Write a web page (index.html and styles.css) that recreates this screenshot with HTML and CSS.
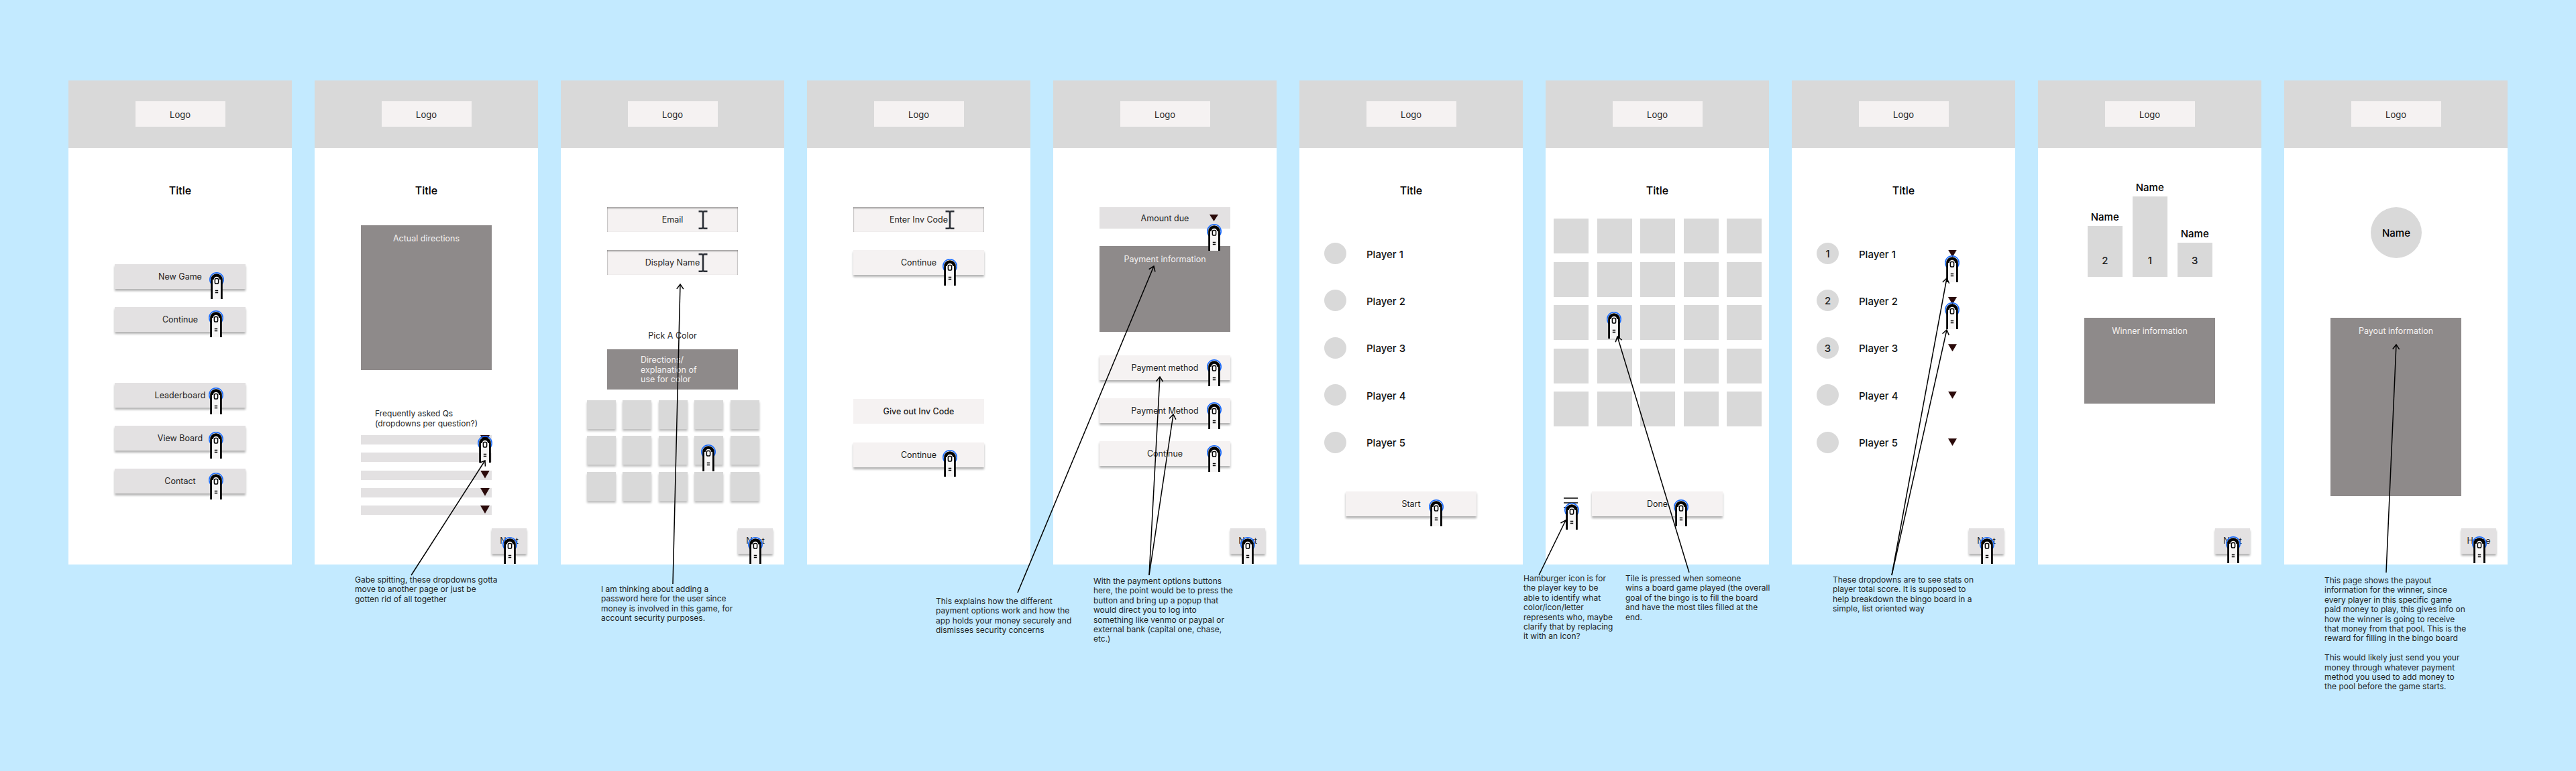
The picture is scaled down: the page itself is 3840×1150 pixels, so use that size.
FILE: index.html
```html
<!DOCTYPE html>
<html>
    <head>
        <title>Bingo wireframes</title>
        <link rel="stylesheet" href="styles.css">
    </head>
    <body>
        <div class="board">

            <!-- home -->
            <section class="screen">
                <header class="top"><div class="logo">Logo</div></header>
                <h2 class="title">Title</h2>
                <div class="stack menu-one">
                    <div class="btn grey">New Game</div>
                    <div class="btn grey">Continue</div>
                </div>
                <div class="stack menu-two">
                    <div class="btn grey">Leaderboard</div>
                    <div class="btn grey">View Board</div>
                    <div class="btn grey">Contact</div>
                </div>
            </section>

            <!-- directions -->
            <section class="screen">
                <header class="top"><div class="logo">Logo</div></header>
                <h2 class="title">Title</h2>
                <div class="dark directions">Actual directions</div>
                <p class="faq">Frequently asked Qs<br>(dropdowns per question?)</p>
                <div class="faq-rows">
                    <div class="faq-row"><span class="tri"></span></div>
                    <div class="faq-row"><span class="tri"></span></div>
                    <div class="faq-row"><span class="tri"></span></div>
                    <div class="faq-row"><span class="tri"></span></div>
                    <div class="faq-row"><span class="tri"></span></div>
                </div>
                <div class="next">Next</div>
            </section>

            <!-- sign up -->
            <section class="screen">
                <header class="top"><div class="logo">Logo</div></header>
                <div class="stack form-top">
                    <div class="btn input">Email</div>
                    <div class="btn input">Display Name</div>
                </div>
                <div class="pick">Pick A Color</div>
                <div class="dark color-help">Directions/<br>explanation of<br>use for color</div>
                <div class="swatches">
                    <div class="swatch"></div><div class="swatch"></div><div class="swatch"></div><div class="swatch"></div><div class="swatch"></div>
                    <div class="swatch"></div><div class="swatch"></div><div class="swatch"></div><div class="swatch"></div><div class="swatch"></div>
                    <div class="swatch"></div><div class="swatch"></div><div class="swatch"></div><div class="swatch"></div><div class="swatch"></div>
                </div>
                <div class="next">Next</div>
            </section>

            <!-- invite code -->
            <section class="screen">
                <header class="top"><div class="logo">Logo</div></header>
                <div class="stack form-top">
                    <div class="btn input">Enter Inv Code</div>
                    <div class="btn light">Continue</div>
                </div>
                <div class="stack invite">
                    <div class="btn flat">Give out Inv Code</div>
                    <div class="btn light">Continue</div>
                </div>
            </section>

            <!-- payment -->
            <section class="screen">
                <header class="top"><div class="logo">Logo</div></header>
                <div class="amount">Amount due<span class="tri"></span></div>
                <div class="dark pay-info">Payment information</div>
                <div class="stack pay-buttons">
                    <div class="btn light">Payment method</div>
                    <div class="btn light">Payment Method</div>
                    <div class="btn light">Continue</div>
                </div>
                <div class="next">Next</div>
            </section>

            <!-- player list -->
            <section class="screen">
                <header class="top"><div class="logo">Logo</div></header>
                <h2 class="title">Title</h2>
                <div class="players">
                    <div class="player"><span class="dot"></span><span class="player-name">Player 1</span></div>
                    <div class="player"><span class="dot"></span><span class="player-name">Player 2</span></div>
                    <div class="player"><span class="dot"></span><span class="player-name">Player 3</span></div>
                    <div class="player"><span class="dot"></span><span class="player-name">Player 4</span></div>
                    <div class="player"><span class="dot"></span><span class="player-name">Player 5</span></div>
                </div>
                <div class="btn light lower">Start</div>
            </section>

            <!-- bingo board -->
            <section class="screen">
                <header class="top"><div class="logo">Logo</div></header>
                <h2 class="title">Title</h2>
                <div class="tiles">
                    <div class="tile"></div><div class="tile"></div><div class="tile"></div><div class="tile"></div><div class="tile"></div>
                    <div class="tile"></div><div class="tile"></div><div class="tile"></div><div class="tile"></div><div class="tile"></div>
                    <div class="tile"></div><div class="tile"></div><div class="tile"></div><div class="tile"></div><div class="tile"></div>
                    <div class="tile"></div><div class="tile"></div><div class="tile"></div><div class="tile"></div><div class="tile"></div>
                    <div class="tile"></div><div class="tile"></div><div class="tile"></div><div class="tile"></div><div class="tile"></div>
                </div>
                <div class="btn light done">Done</div>
            </section>

            <!-- scores -->
            <section class="screen">
                <header class="top"><div class="logo">Logo</div></header>
                <h2 class="title">Title</h2>
                <div class="players">
                    <div class="player"><span class="dot">1</span><span class="player-name">Player 1</span><span class="tri"></span></div>
                    <div class="player"><span class="dot">2</span><span class="player-name">Player 2</span><span class="tri"></span></div>
                    <div class="player"><span class="dot">3</span><span class="player-name">Player 3</span><span class="tri"></span></div>
                    <div class="player"><span class="dot"></span><span class="player-name">Player 4</span><span class="tri"></span></div>
                    <div class="player"><span class="dot"></span><span class="player-name">Player 5</span><span class="tri"></span></div>
                </div>
                <div class="next">Next</div>
            </section>

            <!-- winners -->
            <section class="screen">
                <header class="top"><div class="logo">Logo</div></header>
                <div class="podium">
                    <div class="place"><div class="place-name">Name</div><div class="bar second">2</div></div>
                    <div class="place"><div class="place-name">Name</div><div class="bar first">1</div></div>
                    <div class="place"><div class="place-name">Name</div><div class="bar third">3</div></div>
                </div>
                <div class="dark winner-info">Winner information</div>
                <div class="next">Next</div>
            </section>

            <!-- payout -->
            <section class="screen">
                <header class="top"><div class="logo">Logo</div></header>
                <div class="bubble">Name</div>
                <div class="dark payout-info">Payout information</div>
                <div class="next">Home</div>
            </section>
        </div>

        <!-- sticky notes under the screens -->
        <p class="note note-faq">Gabe spitting, these dropdowns gotta<br>move to another page or just be<br>gotten rid of all together</p>
        <p class="note note-password">I am thinking about adding a<br>password here for the user since<br>money is involved in this game, for<br>account security purposes.</p>
        <p class="note note-explain">This explains how the different<br>payment options work and how the<br>app holds your money securely and<br>dismisses security concerns</p>
        <p class="note note-options">With the payment options buttons<br>here, the point would be to press the<br>button and bring up a popup that<br>would direct you to log into<br>something like venmo or paypal or<br>external bank (capital one, chase,<br>etc.)</p>
        <p class="note note-burger">Hamburger icon is for<br>the player key to be<br>able to identify what<br>color/icon/letter<br>represents who, maybe<br>clarify that by replacing<br>it with an icon?</p>
        <p class="note note-tile">Tile is pressed when someone<br>wins a board game played (the overall<br>goal of the bingo is to fill the board<br>and have the most tiles filled at the<br>end.</p>
        <p class="note note-stats">These dropdowns are to see stats on<br>player total score. It is supposed to<br>help breakdown the bingo board in a<br>simple, list oriented way</p>
        <p class="note note-payout">This page shows the payout<br>information for the winner, since<br>every player in this specific game<br>paid money to play, this gives info on<br>how the winner is going to receive<br>that money from that pool. This is the<br>reward for filling in the bingo board<br><br>This would likely just send you your<br>money through whatever payment<br>method you used to add money to<br>the pool before the game starts.</p>

        <!-- cursors and arrows drawn on top of everything -->
        <svg class="overlay" width="3840" height="1150" viewBox="0 0 3840 1150">
            <defs>
                <symbol id="hand" viewBox="0 0 22 40" width="22" height="40" overflow="visible">
                    <circle cx="11" cy="11" r="10.2" fill="none" stroke="#1a6cff" stroke-width="1.6"/>
                    <path d="M3.6 40V11a7.4 7.4 0 0 1 14.8 0V40" fill="#f7f6f6" stroke="#000" stroke-width="2.8"/>
                    <path d="M5.6 11a5.4 5.4 0 0 1 10.8 0" fill="none" stroke="#000" stroke-width="2.2"/>
                    <rect x="8.4" y="9.5" width="5.2" height="7.5" rx="1.8" fill="#fff" stroke="#000" stroke-width="1.5"/>
                    <path d="M8.8 27.6h4.4M8.8 30.6h4.4" stroke="#000" stroke-width="1.5"/>
                </symbol>
                <symbol id="ibeam" viewBox="0 0 14 28" width="14" height="28">
                    <path d="M7 2V26M0.5 1.2H5.5L7 2.4L8.5 1.2H13.5M0.5 26.8H5.5L7 25.6L8.5 26.8H13.5" fill="none" stroke="#2b2f36" stroke-width="2.6"/>
                </symbol>
                <marker id="head" markerUnits="userSpaceOnUse" markerWidth="20" markerHeight="20" refX="10" refY="10" orient="auto" overflow="visible">
                    <path d="M3 5L10 10L3 15" fill="none" stroke="#000" stroke-width="1.5"/>
                </marker>
            </defs>

            <use href="#ibeam" x="1041" y="314"/>
            <use href="#ibeam" x="1041" y="378"/>
            <use href="#ibeam" x="1409" y="314"/>

            <path d="M2331 743h21M2331 750h21M2331 757h21" stroke="#000" stroke-width="1.4"/>

            <use href="#hand" x="312" y="406"/>
            <use href="#hand" x="311" y="463"/>
            <use href="#hand" x="311" y="578"/>
            <use href="#hand" x="311" y="644"/>
            <use href="#hand" x="311" y="705"/>
            <use href="#hand" x="712" y="650"/>
            <use href="#hand" x="749" y="801"/>
            <use href="#hand" x="1045" y="663"/>
            <use href="#hand" x="1115" y="801"/>
            <use href="#hand" x="1405" y="386"/>
            <use href="#hand" x="1405" y="671"/>
            <use href="#hand" x="1799" y="334"/>
            <use href="#hand" x="1799" y="536"/>
            <use href="#hand" x="1799" y="600"/>
            <use href="#hand" x="1799" y="664"/>
            <use href="#hand" x="1849" y="801"/>
            <use href="#hand" x="2130" y="745"/>
            <use href="#hand" x="2395" y="465"/>
            <use href="#hand" x="2332" y="750"/>
            <use href="#hand" x="2495" y="745"/>
            <use href="#hand" x="2899" y="381"/>
            <use href="#hand" x="2899" y="451"/>
            <use href="#hand" x="2951" y="801"/>
            <use href="#hand" x="3318" y="800"/>
            <use href="#hand" x="3685" y="800"/>

            <g fill="none" stroke="#000" stroke-width="1.5">
                <line x1="613" y1="858" x2="723" y2="687" marker-end="url(#head)"/>
                <line x1="1003" y1="871" x2="1014" y2="424" marker-end="url(#head)"/>
                <line x1="1517" y1="884" x2="1720" y2="397" marker-end="url(#head)"/>
                <line x1="1713" y1="858" x2="1729" y2="562" marker-end="url(#head)"/>
                <line x1="1713" y1="858" x2="1749" y2="618" marker-end="url(#head)"/>
                <line x1="2294" y1="858" x2="2334" y2="776" marker-end="url(#head)"/>
                <line x1="2518" y1="854" x2="2411" y2="502" marker-end="url(#head)"/>
                <line x1="2820" y1="858" x2="2902" y2="415" marker-end="url(#head)"/>
                <line x1="2820" y1="858" x2="2902" y2="492" marker-end="url(#head)"/>
                <line x1="3557" y1="854" x2="3572" y2="514" marker-end="url(#head)"/>
            </g>
        </svg>
    </body>
</html>
```

FILE: styles.css
```css
body {
    margin: 0;
    width: 3840px;
    height: 1150px;
    position: relative;
    overflow: hidden;
    background-color: #c3eaff;
    font-family: Inter, "Noto Sans", sans-serif;
    color: #1e1e1e;
    font-size: 12px;
}

.board {
    display: flex;
    gap: 34px;
    padding: 120px 0 0 102px;
}

.screen {
    width: 333px;
    height: 722px;
    flex: none;
    display: flex;
    flex-direction: column;
    background-color: #fff;
}

.top {
    height: 101px;
    flex: none;
    display: flex;
    justify-content: center;
    padding-top: 31px;
    box-sizing: border-box;
    background-color: #d9d9d9;
}

.logo {
    width: 134px;
    height: 38px;
    line-height: 40px;
    text-align: center;
    font-size: 13px;
    background-color: #f5f2f2;
}

.title {
    margin: 52px 0 0;
    height: 20px;
    line-height: 22px;
    text-align: center;
    font-size: 16px;
    font-weight: 500;
    color: #000;
}

/* buttons */
.stack {
    display: flex;
    flex-direction: column;
    align-items: center;
    gap: 27px;
}

.menu-one { margin-top: 101px; }
.menu-two { margin-top: 76px; }
.form-top { margin-top: 88px; }
.invite { margin-top: 185px; gap: 28px; }
.pay-buttons { margin-top: 35px; }

.btn {
    width: 195px;
    height: 37px;
    line-height: 38px;
    flex: none;
    text-align: center;
    font-size: 12.5px;
}

.grey {
    background-color: #e3e1e2;
    box-shadow: 0 3px 3px rgba(0, 0, 0, 0.3);
}

.light {
    background-color: #f5f2f2;
    box-shadow: 0 3px 3px rgba(0, 0, 0, 0.3);
}

.flat {
    background-color: #f5f2f2;
    font-weight: 500;
}

.input {
    background-color: #f5f2f2;
    box-shadow: inset 0 2px 2px rgba(0, 0, 0, 0.3), inset 1px 0 1px rgba(0, 0, 0, 0.12), inset -1px 0 1px rgba(0, 0, 0, 0.12);
}

.lower { margin: 57px 0 0 69px; }
.done { margin: 97px 0 0 69px; }

.next {
    width: 52px;
    height: 38px;
    line-height: 38px;
    flex: none;
    margin: auto 17px 16px auto;
    text-align: center;
    font-size: 12.5px;
    background-color: #e3e1e2;
    box-shadow: 0 3px 3px rgba(0, 0, 0, 0.3);
}

/* grey text blocks */
.dark {
    width: 195px;
    flex: none;
    align-self: center;
    box-sizing: border-box;
    padding-top: 10px;
    line-height: 20px;
    text-align: center;
    font-size: 12.5px;
    color: #f5f2f2;
    background-color: #8e8a8a;
}

.directions { height: 216px; margin-top: 43px; }
.pay-info { height: 128px; margin-top: 26px; }
.winner-info { height: 128px; margin-top: 61px; }
.payout-info { height: 266px; margin-top: 89px; }

.color-help {
    height: 60px;
    margin-top: 11px;
    padding: 9px 0 0 50px;
    line-height: 14.6px;
    text-align: left;
}

/* faq */
.faq {
    margin: 58px 0 0 90px;
    line-height: 14.5px;
}

.faq-rows {
    display: flex;
    flex-direction: column;
    gap: 12.25px;
    margin-top: 10px;
}

.faq-row {
    width: 195px;
    height: 14px;
    margin-left: 69px;
    display: flex;
    justify-content: flex-end;
    padding-right: 3px;
    box-sizing: border-box;
    background-color: #e3e1e2;
}

.tri {
    width: 14px;
    height: 12px;
    flex: none;
    background-color: #2b0a0a;
    clip-path: polygon(0 0, 100% 0, 50% 100%);
}

/* colour picker */
.pick {
    margin-top: 80px;
    height: 20px;
    line-height: 22px;
    text-align: center;
    font-size: 12.5px;
}

.swatches {
    display: grid;
    grid-template-columns: repeat(5, 43px);
    grid-auto-rows: 43px;
    gap: 10.4px;
    margin: 16px 0 0 39px;
}

.swatch {
    background-color: #d9d9d9;
    box-shadow: 0 3px 3px rgba(0, 0, 0, 0.25);
}

/* payment */
.amount {
    width: 195px;
    height: 32px;
    line-height: 33px;
    margin: 88px 0 0 69px;
    position: relative;
    text-align: center;
    font-size: 12.5px;
    background-color: #e3e1e2;
}

.amount .tri {
    position: absolute;
    top: 11px;
    right: 18px;
    width: 13px;
    height: 10px;
}

/* players */
.players {
    display: flex;
    flex-direction: column;
    gap: 38.4px;
    margin-top: 69px;
}

.player {
    height: 32px;
    display: flex;
    align-items: center;
    padding-left: 37px;
}

.dot {
    width: 33px;
    height: 32px;
    flex: none;
    margin-right: 30px;
    border-radius: 50%;
    line-height: 34px;
    text-align: center;
    font-size: 15px;
    font-weight: 500;
    background-color: #d9d9d9;
}

.player-name {
    width: 133px;
    flex: none;
    padding-top: 2px;
    font-size: 15px;
    font-weight: 500;
    color: #111;
}

.player .tri {
    width: 13px;
    height: 11px;
}

/* board */
.tiles {
    display: grid;
    grid-template-columns: repeat(5, 52px);
    grid-auto-rows: 52px;
    gap: 12.6px;
    margin: 33px 0 0 12px;
}

.tile { background-color: #d9d9d9; }

/* winners */
.podium {
    display: flex;
    align-items: flex-end;
    gap: 15.5px;
    margin: 48px 0 0 74px;
}

.place { width: 51.5px; }

.place-name {
    height: 20px;
    line-height: 22px;
    margin-bottom: 4px;
    text-align: center;
    font-size: 15px;
    font-weight: 500;
    color: #000;
    white-space: nowrap;
}

.bar {
    display: flex;
    align-items: flex-end;
    justify-content: center;
    box-sizing: border-box;
    padding-bottom: 14px;
    line-height: 20px;
    font-size: 15px;
    font-weight: 500;
    background-color: #d9d9d9;
}

.first { height: 120px; }
.second { height: 76px; }
.third { height: 51px; }

.bubble {
    width: 76px;
    height: 76px;
    flex: none;
    margin: 88px 0 0 129px;
    border-radius: 50%;
    line-height: 78px;
    text-align: center;
    font-size: 15px;
    font-weight: 500;
    color: #000;
    background-color: #d9d9d9;
}

/* notes */
.note {
    position: absolute;
    margin: 0;
    line-height: 14.4px;
    white-space: nowrap;
}

.note-faq { left: 529px; top: 858px; }
.note-password { left: 896px; top: 872px; }
.note-explain { left: 1395px; top: 890px; }
.note-options { left: 1630px; top: 860px; }
.note-burger { left: 2271px; top: 856px; }
.note-tile { left: 2423px; top: 856px; }
.note-stats { left: 2732px; top: 858px; }
.note-payout { left: 3465px; top: 859px; }

.overlay {
    position: absolute;
    left: 0;
    top: 0;
    pointer-events: none;
}
```
